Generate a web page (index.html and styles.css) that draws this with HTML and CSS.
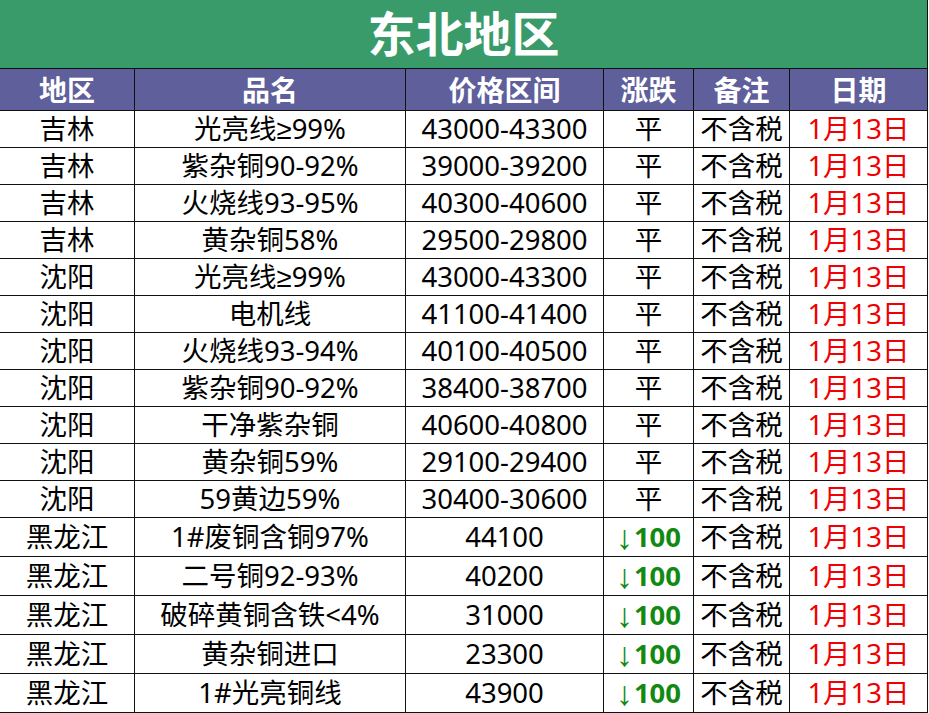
FILE: index.html
```html
<!DOCTYPE html>
<html lang="zh-CN">
<head>
<meta charset="utf-8">
<title>东北地区</title>
<link rel="stylesheet" href="styles.css">
</head>
<body>
<div class="sheet">
  <div class="title">东北地区</div>
  <div class="grid">
    <div class="c hd">地区</div><div class="c hd">品名</div><div class="c hd">价格区间</div><div class="c hd">涨跌</div><div class="c hd">备注</div><div class="c hd">日期</div>

    <div class="c">吉林</div><div class="c">光亮线≥99%</div><div class="c">43000-43300</div><div class="c">平</div><div class="c">不含税</div><div class="c red">1月13日</div>
    <div class="c">吉林</div><div class="c">紫杂铜90-92%</div><div class="c">39000-39200</div><div class="c">平</div><div class="c">不含税</div><div class="c red">1月13日</div>
    <div class="c">吉林</div><div class="c">火烧线93-95%</div><div class="c">40300-40600</div><div class="c">平</div><div class="c">不含税</div><div class="c red">1月13日</div>
    <div class="c">吉林</div><div class="c">黄杂铜58%</div><div class="c">29500-29800</div><div class="c">平</div><div class="c">不含税</div><div class="c red">1月13日</div>
    <div class="c">沈阳</div><div class="c">光亮线≥99%</div><div class="c">43000-43300</div><div class="c">平</div><div class="c">不含税</div><div class="c red">1月13日</div>
    <div class="c">沈阳</div><div class="c">电机线</div><div class="c">41100-41400</div><div class="c">平</div><div class="c">不含税</div><div class="c red">1月13日</div>
    <div class="c">沈阳</div><div class="c">火烧线93-94%</div><div class="c">40100-40500</div><div class="c">平</div><div class="c">不含税</div><div class="c red">1月13日</div>
    <div class="c">沈阳</div><div class="c">紫杂铜90-92%</div><div class="c">38400-38700</div><div class="c">平</div><div class="c">不含税</div><div class="c red">1月13日</div>
    <div class="c">沈阳</div><div class="c">干净紫杂铜</div><div class="c">40600-40800</div><div class="c">平</div><div class="c">不含税</div><div class="c red">1月13日</div>
    <div class="c">沈阳</div><div class="c">黄杂铜59%</div><div class="c">29100-29400</div><div class="c">平</div><div class="c">不含税</div><div class="c red">1月13日</div>
    <div class="c">沈阳</div><div class="c">59黄边59%</div><div class="c">30400-30600</div><div class="c">平</div><div class="c">不含税</div><div class="c red">1月13日</div>

    <div class="c">黑龙江</div><div class="c">1#废铜含铜97%</div><div class="c">44100</div><div class="c down"><span class="arr">↓</span>100</div><div class="c">不含税</div><div class="c red">1月13日</div>
    <div class="c">黑龙江</div><div class="c">二号铜92-93%</div><div class="c">40200</div><div class="c down"><span class="arr">↓</span>100</div><div class="c">不含税</div><div class="c red">1月13日</div>
    <div class="c">黑龙江</div><div class="c">破碎黄铜含铁&lt;4%</div><div class="c">31000</div><div class="c down"><span class="arr">↓</span>100</div><div class="c">不含税</div><div class="c red">1月13日</div>
    <div class="c">黑龙江</div><div class="c">黄杂铜进口</div><div class="c">23300</div><div class="c down"><span class="arr">↓</span>100</div><div class="c">不含税</div><div class="c red">1月13日</div>
    <div class="c">黑龙江</div><div class="c">1#光亮铜线</div><div class="c">43900</div><div class="c down"><span class="arr">↓</span>100</div><div class="c">不含税</div><div class="c red">1月13日</div>
  </div>
</div>
</body>
</html>
```
FILE: styles.css
```css
* { box-sizing: border-box; }
html, body { margin: 0; padding: 0; background: #ffffff; }
body {
  font-family: "Noto Sans", "Liberation Sans", "Noto Sans CJK SC", sans-serif;
  color: #000;
}
.sheet {
  width: 928px;
}
.title {
  height: 69px;
  background: #389b69;
  color: #ffffff;
  font-weight: 700;
  font-size: 48px;
  line-height: 1;
  display: flex;
  align-items: center;
  justify-content: center;
  border-bottom: 1px solid #111;
  border-right: 1px solid #111;
}
.grid {
  display: grid;
  grid-template-columns: 135px 271px 198px 90px 96px 138px;
  grid-template-rows: 42px repeat(11, 37px) repeat(5, 39px);
}
.c {
  border-right: 1px solid #111;
  border-bottom: 1px solid #111;
  display: flex;
  align-items: center;
  justify-content: center;
  font-size: 27.5px;
  line-height: 1;
  white-space: nowrap;
  overflow: hidden;
}
.hd {
  background: #5f5f9b;
  color: #ffffff;
  font-weight: 700;
  font-size: 28px;
}
.red { color: #f00000; }
.down {
  color: #128a12;
  font-weight: 700;
}
.arr {
  font-family: "Liberation Sans", "DejaVu Sans", sans-serif;
  font-weight: 400;
  font-size: 34px;
  margin-right: 1px;
}
```
